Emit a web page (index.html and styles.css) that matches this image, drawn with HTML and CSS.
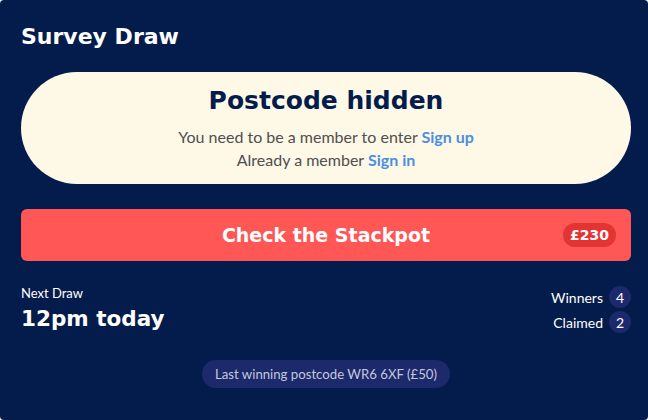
FILE: index.html
```html
<!DOCTYPE html>
<html lang="en">
<head>
<meta charset="utf-8">
<title>Survey Draw</title>
<link rel="stylesheet" href="styles.css">
</head>
<body>
<main class="card">
  <h1 class="title">Survey Draw</h1>
  <section class="hero">
    <h2 class="hero-title">Postcode hidden</h2>
    <p class="hero-line">You need to be a member to enter <a class="link" href="#">Sign up</a></p>
    <p class="hero-line">Already a member <a class="link" href="#">Sign in</a></p>
  </section>
  <button class="cta" type="button">
    <span class="cta-label">Check the Stackpot</span>
    <span class="cta-badge">£230</span>
  </button>
  <section class="stats">
    <div class="next">
      <div class="next-label">Next Draw</div>
      <div class="next-time">12pm today</div>
    </div>
    <div class="counts">
      <div class="count-row"><span class="count-label">Winners</span><span class="count-num">4</span></div>
      <div class="count-row"><span class="count-label">Claimed</span><span class="count-num">2</span></div>
    </div>
  </section>
  <div class="last-wrap">
    <div class="last">Last winning postcode WR6 6XF (£50)</div>
  </div>
</main>
</body>
</html>
```
FILE: styles.css
```css
html, body {
  margin: 0;
  padding: 0;
  background: #ffffff;
}
.card {
  box-sizing: border-box;
  width: 648px;
  height: 420px;
  background: #041c4b;
  border-radius: 4px;
  padding: 21px 17px 0 21px;
  font-family: "Lato", "Liberation Sans", sans-serif;
  color: #ffffff;
}
.title,
.hero-title,
.cta,
.next-time {
  font-family: "DejaVu Sans", "Open Sans", sans-serif;
  font-weight: 700;
}
.title {
  margin: 0;
  font-size: 22px;
  line-height: 32px;
}
.hero {
  margin-top: 19px;
  height: 112px;
  box-sizing: border-box;
  background: #fef8e7;
  border-radius: 56px;
  padding-top: 12px;
  text-align: center;
}
.hero-title {
  margin: 0 0 7px;
  font-size: 25px;
  line-height: 34px;
  color: #041c4b;
}
.hero-line {
  margin: 0;
  font-size: 16px;
  line-height: 23px;
  color: #4f4f4f;
}
.link {
  color: #4a8fe3;
  font-weight: 700;
  text-decoration: none;
}
.cta {
  position: relative;
  display: flex;
  align-items: center;
  justify-content: center;
  width: 100%;
  height: 52px;
  margin-top: 25px;
  border: 0;
  border-radius: 6px;
  background: #ff5656;
  color: #ffffff;
  font-size: 19px;
  padding: 0;
  cursor: pointer;
}
.cta-badge {
  position: absolute;
  right: 15px;
  top: 14px;
  height: 24px;
  line-height: 24px;
  padding: 0 7px;
  border-radius: 12px;
  background: #e33333;
  font-size: 14px;
}
.stats {
  display: flex;
  justify-content: space-between;
  align-items: flex-start;
  margin-top: 23px;
}
.next-label {
  font-size: 13px;
  line-height: 18px;
}
.next-time {
  margin-top: 2px;
  font-size: 21.5px;
  line-height: 30px;
}
.counts {
  margin-top: 2px;
  display: flex;
  flex-direction: column;
  gap: 3px;
}
.count-row {
  display: flex;
  align-items: center;
  justify-content: flex-end;
  gap: 6px;
  font-size: 14px;
}
.count-num {
  width: 22px;
  height: 22px;
  border-radius: 50%;
  background: #1c2a6b;
  display: flex;
  align-items: center;
  justify-content: center;
  font-size: 14px;
}
.last-wrap {
  display: flex;
  justify-content: center;
  margin-top: 26px;
}
.last {
  height: 28px;
  line-height: 28px;
  padding: 0 13px;
  border-radius: 14px;
  background: #1c2a6b;
  color: #c3c8de;
  font-size: 13.2px;
}
```
